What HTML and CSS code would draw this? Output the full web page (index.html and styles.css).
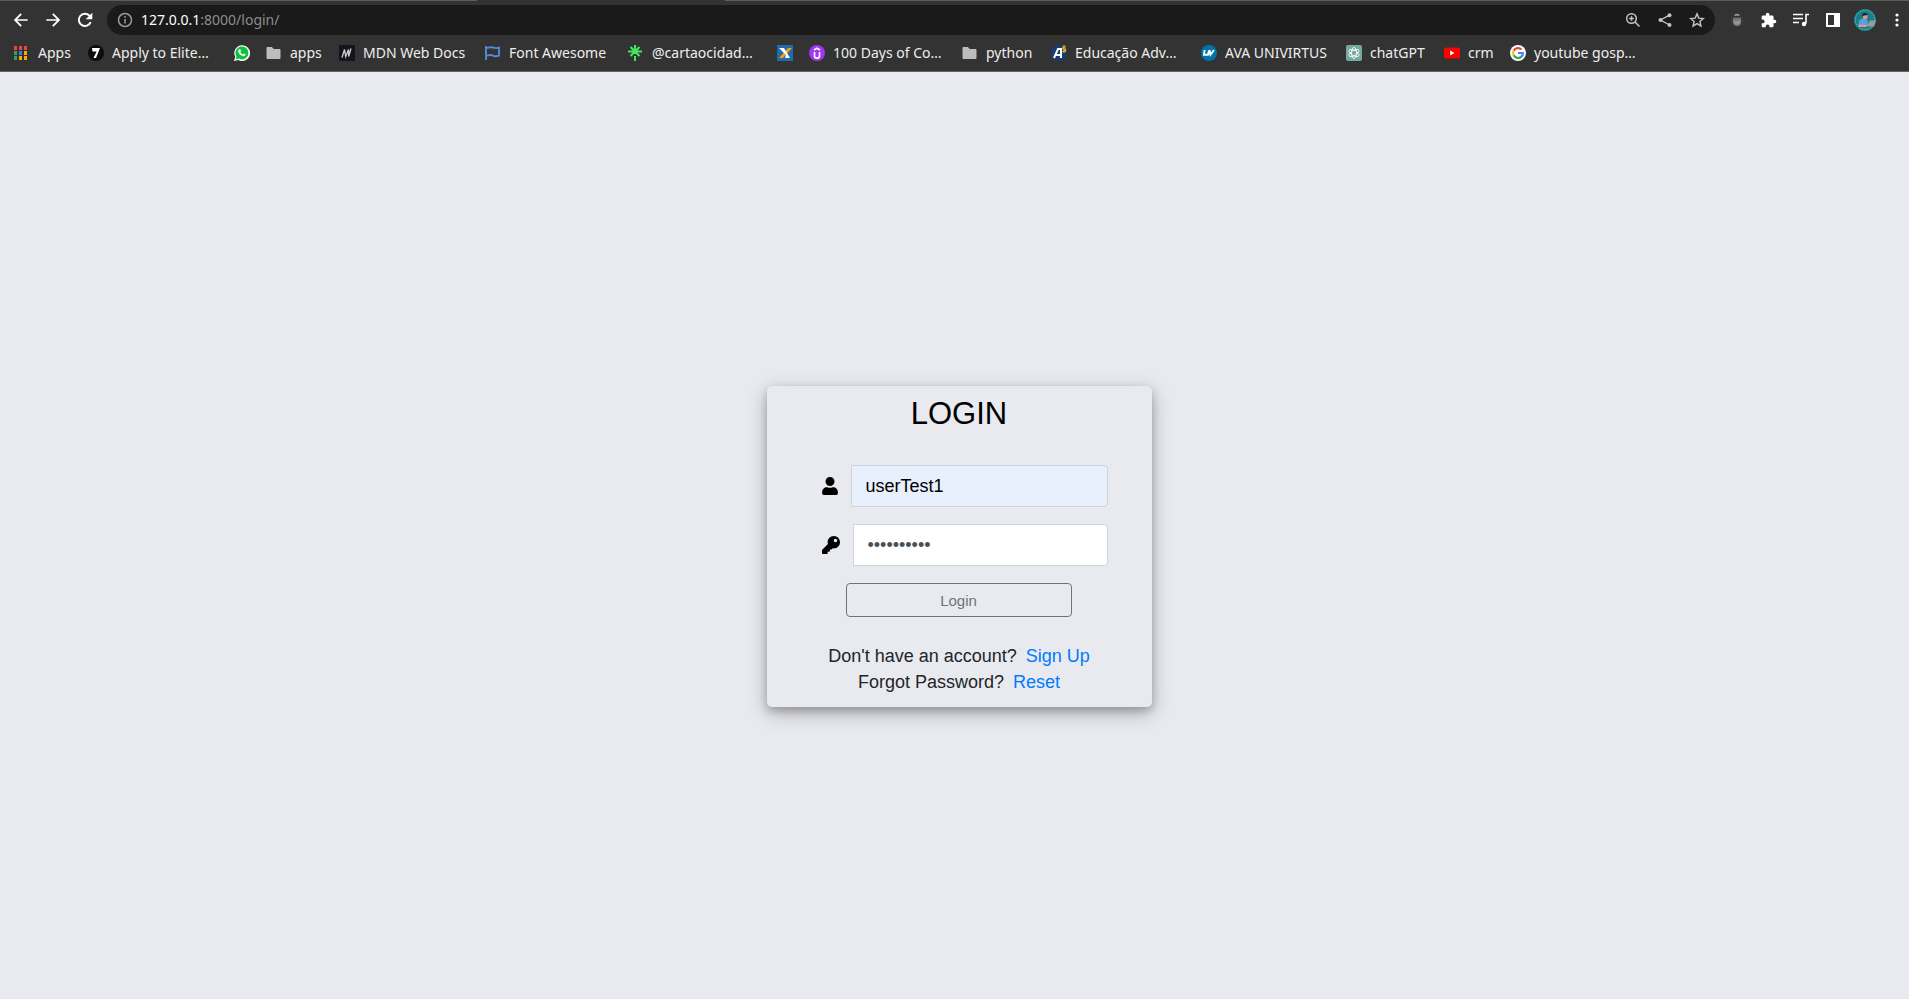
FILE: index.html
```
<!DOCTYPE html>
<html lang="en">
<head>
<meta charset="utf-8">
<title>Login</title>
<link rel="stylesheet" href="styles.css">
</head>
<body>
<header class="browser">
  <div class="tab-edge"><span class="edge-left"></span><span class="edge-right"></span></div>
  <div class="toolbar">
    <nav class="nav-buttons">
      <button class="icon-button" aria-label="Back"><svg class="icon-nav" viewBox="0 0 24 24" fill="#fff"><path d="M22 10.700H6.200l7-7L11.300 1.900 1.200 12l10.100 10.100 1.900-1.800-7-7H22z"/></svg></button>
      <button class="icon-button" aria-label="Forward"><svg class="icon-nav" viewBox="0 0 24 24" fill="#fff"><path d="M2 10.700h15.800l-7-7 1.900-1.800L22.800 12 12.700 22.100l-1.900-1.800 7-7H2z"/></svg></button>
      <button class="icon-button" aria-label="Reload"><svg class="icon-nav" viewBox="0 0 24 24"><path d="M20.500 15.200A9.200 9.200 0 1 1 18.700 5.500L21 8" fill="none" stroke="#fff" stroke-width="2.900"/><path d="M23 1v10H13z" fill="#fff"/></svg></button>
    </nav>
    <div class="omnibox">
      <svg class="icon-info" viewBox="0 0 16 16" fill="none" stroke="#9a9a9a" stroke-width="1.500"><circle cx="8" cy="8" r="6.500"/><path d="M8 7v4.500M8 4v1.700"/></svg>
      <span class="address"><span class="host">127.0.0.1</span>:8000/login/</span>
      <button class="icon-button" aria-label="Zoom"><svg class="icon-action" viewBox="0 0 16 16" fill="none" stroke="#c4c4c4" stroke-width="1.500"><circle cx="6.500" cy="6.500" r="4.800"/><path d="M10 10l4.500 4.500M6.500 4.200v4.600M4.200 6.500h4.600"/></svg></button>
      <button class="icon-button" aria-label="Share"><svg class="icon-action" viewBox="0 0 16 16" fill="#c4c4c4"><path d="M12.500 3.200L3.500 8l9 5" fill="none" stroke="#c4c4c4" stroke-width="1.400"/><circle cx="12.500" cy="3.200" r="2"/><circle cx="3.500" cy="8" r="2"/><circle cx="12.500" cy="13" r="2"/></svg></button>
      <button class="icon-button" aria-label="Bookmark this tab"><svg class="icon-action" viewBox="0 0 16 16" fill="none" stroke="#c4c4c4" stroke-width="1.400"><path d="M8 1.900l1.800 4.200 4.500.4-3.400 3 1 4.500L8 11.600 4.100 14l1-4.500-3.400-3 4.500-.4z"/></svg></button>
    </div>
    <div class="extensions">
      <button class="icon-button" aria-label="Debugger extension"><svg class="icon-action" viewBox="0 0 16 16"><defs><linearGradient id="bug" x1="0" y1="0" x2="0" y2="1"><stop offset="0" stop-color="#666"/><stop offset=".6" stop-color="#999"/><stop offset="1" stop-color="#777"/></linearGradient></defs><path d="M5 3.800C5.300 1 10.700 1 11 3.800z" fill="#999"/><path d="M4 5.500h8v4c0 6-8 6-8 0z" fill="url(#bug)"/><path d="M2 5l2 2M14 5l-2 2M1 9h3M12 9h3M2 13l2.500-2M14 13l-2.500-2" stroke="#494949"/></svg></button>
      <button class="icon-button" aria-label="Extensions"><svg class="icon-action" viewBox="1 0 23 23" fill="#fff"><path d="M20.500 11H19V7a2 2 0 0 0-2-2h-4V3.500a2.500 2.500 0 0 0-5 0V5H4a2 2 0 0 0-2 2v3.800h1.500a2.700 2.700 0 0 1 0 5.400H2V20c0 1.100.9 2 2 2h3.800v-1.500a2.700 2.700 0 0 1 5.400 0V22H17a2 2 0 0 0 2-2v-4h1.500a2.500 2.500 0 0 0 0-5z"/></svg></button>
      <button class="icon-button" aria-label="Media controls"><svg class="icon-action" viewBox="0 0 16 16" fill="none" stroke="#fff" stroke-width="1.600"><path d="M0 2.500h10M0 6.500h10M0 10.500h6"/><path d="M16 2.500h-3v9"/><circle cx="11" cy="12" r="2.200" fill="#fff" stroke="none"/></svg></button>
      <button class="icon-button" aria-label="Side panel"><svg class="icon-action" viewBox="0 0 16 16"><path d="M1 1h14v14H1zM3 3v10h6V3z" fill="#fff" fill-rule="evenodd"/></svg></button>
      <button class="icon-button" aria-label="Profile"><svg class="icon-avatar" viewBox="0 0 22 22"><circle cx="11" cy="11" r="11" fill="#15808a"/><circle cx="11" cy="11" r="9.700" fill="none" stroke="#78b5b7" stroke-dasharray="1.500 1"/><path d="M4 17l1.500-6 4-2 4 2 1 6z" fill="#5b9fdf"/><path d="M9 5.500h4.500V9l-2 1.500L9 9z" fill="#dc9c80"/><path d="M8 7.500C7.500 3 13.500 3 14 6l-4 .5z" fill="#182026"/><path d="M16 11.500h6l-2 6h-7z" fill="#9c9a98"/><path d="M4.500 15.500l8 .5v2H5z" fill="#dc9c80"/></svg></button>
      <button class="icon-button" aria-label="Menu"><svg class="icon-action" viewBox="0 0 16 16" fill="#fff"><circle cx="8" cy="3" r="1.600"/><circle cx="8" cy="8" r="1.600"/><circle cx="8" cy="13" r="1.600"/></svg></button>
    </div>
  </div>
  <nav class="bookmarks" aria-label="Bookmarks">
    <a class="bookmark" href="#"><svg class="icon-mark" viewBox="0 0 16 16"><path d="M0 1h3v4H0zM5 1h3v4H5zM10 1h3v4h-3z" fill="#ee4438"/><path d="M0 6h3v4H0zM0 11h3v4H0z" fill="#34a060"/><path d="M5 6h3v4H5z" fill="#2e82ee"/><path d="M10 6h3v4h-3zM5 11h3v4H5zM10 11h3v4h-3z" fill="#f9ab00"/></svg>Apps</a>
    <a class="bookmark" href="#"><svg class="icon-mark" viewBox="0 0 16 16"><circle cx="8" cy="8" r="8" fill="#0c0c0c"/><path d="M4 3h8L8 13H5.500L8.600 6.500H4.500z" fill="#fff"/></svg>Apply to Elite…</a>
    <a class="bookmark" href="#" aria-label="WhatsApp"><svg class="icon-mark" viewBox="0 0 16 16"><path d="M0 16l1.200-4.200A7.900 7.900 0 1 1 4.300 15z" fill="#fff"/><path d="M1.600 14.400l.8-3A6.500 6.500 0 1 1 4.700 13.600z" fill="#0dc143"/><path d="M5.200 4.200l1.100.1.700 1.800-.7.900c.6 1.200 1.400 1.900 2.600 2.400l.9-1 1.800.9c0 1.500-1.200 2-2.200 1.900-2.700-.4-4.900-2.700-5.200-4.900 0-.8.400-1.700 1-2.100z" fill="#fff"/></svg></a>
    <a class="bookmark" href="#"><svg class="icon-mark" viewBox="0 0 16 16"><path d="M1 2.500h5l1.800 2H14v9H1z" fill="#bdbdbd" stroke="#bdbdbd" stroke-linejoin="round"/></svg>apps</a>
    <a class="bookmark" href="#"><svg class="icon-mark" viewBox="0 0 16 16"><path d="M0 0h16v16H0z" fill="#15141f"/><path d="M3 12.500l2.500-8 1.200 7 2.800-7 .2 7 2.300-8" fill="none" stroke="#ccc" stroke-width="1.300"/></svg>MDN Web Docs</a>
    <a class="bookmark" href="#"><svg class="icon-mark" viewBox="0 0 16 16"><path d="M1 1v14M1 3c2 0 3-1 5.500-.8S10 4 14 2.700v8c-4 1.200-5 .3-7-.5S3.500 10.500 1 11" fill="none" stroke="#538bd9" stroke-width="1.900"/></svg>Font Awesome</a>
    <a class="bookmark" href="#"><svg class="icon-mark" viewBox="0 0 16 16"><path d="M7 0v9M0 6.500h14M2.500 2l9 9M11.500 2l-9 9M7 11v5" stroke="#43e660" stroke-width="2" fill="none"/></svg>@cartaocidad…</a>
    <a class="bookmark" href="#" aria-label="X"><svg class="icon-mark" viewBox="0 0 16 16"><path d="M0 0h16v16H0z" fill="#236aaa"/><path d="M15 3h-4L2 13h4z" fill="#f99d1c"/><path d="M2 3h5l6 10H8L9 10z" fill="#fff"/></svg></a>
    <a class="bookmark" href="#"><svg class="icon-mark" viewBox="0 0 16 16"><circle cx="8" cy="8" r="8" fill="#a435f0"/><path d="M5.500 7v4q0 2.200 2.500 2.200t2.500-2.200V7M5 5l3-1.700L11 5" fill="none" stroke="#fff" stroke-width="1.700"/></svg>100 Days of Co…</a>
    <a class="bookmark" href="#"><svg class="icon-mark" viewBox="0 0 16 16"><path d="M1 2.500h5l1.800 2H14v9H1z" fill="#bdbdbd" stroke="#bdbdbd" stroke-linejoin="round"/></svg>python</a>
    <a class="bookmark" href="#"><svg class="icon-mark" viewBox="0 0 16 16"><circle cx="8" cy="8" r="8" fill="#173b73"/><path d="M3 13L7 4h3v9M5 10h6" fill="none" stroke="#fff" stroke-width="2"/><path d="M15 2h-3v2h2.500v2.500H11M13 0v8" fill="none" stroke="#e5b22c" stroke-width="1.200"/></svg>Educação Adv…</a>
    <a class="bookmark" href="#"><svg class="icon-mark" viewBox="0 0 16 16"><circle cx="8" cy="8" r="8" fill="#0275a8"/><path d="M3.600 5l-.6 4.700h4L8 5.500M8.500 5l1 4.700L13 5" fill="none" stroke="#fff" stroke-width="1.900"/></svg>AVA UNIVIRTUS</a>
    <a class="bookmark" href="#"><svg class="icon-mark" viewBox="0 0 16 16"><rect width="16" height="16" rx="2" fill="#74aa9c"/><g fill="none" stroke="#fff" stroke-width=".8"><ellipse cx="8" cy="8" rx="2.600" ry="5.600"/><ellipse cx="8" cy="8" rx="2.600" ry="5.600" transform="rotate(60 8 8)"/><ellipse cx="8" cy="8" rx="2.600" ry="5.600" transform="rotate(120 8 8)"/></g></svg>chatGPT</a>
    <a class="bookmark" href="#"><svg class="icon-mark" viewBox="0 0 16 16"><rect y="2.500" width="16" height="11" rx="2.500" fill="#f00"/><path d="M6.200 5.500v5l4.300-2.500z" fill="#fff"/></svg>crm</a>
    <a class="bookmark" href="#"><svg class="icon-mark" viewBox="0 0 16 16"><circle cx="8" cy="8" r="8" fill="#fff"/><g fill="none" stroke-width="2.200"><path d="M11.500 4.600A4.900 4.900 0 0 0 3.700 5.700" stroke="#ea4335"/><path d="M3.700 5.700a4.900 4.900 0 0 0 0 4.600" stroke="#fbbc05"/><path d="M3.700 10.300a4.900 4.900 0 0 0 7.800 1.300" stroke="#34a853"/><path d="M11.300 11.800A4.900 4.900 0 0 0 12.900 8H8" stroke="#4285f4"/></g></svg>youtube gosp…</a>
  </nav>
</header>
<main class="page">
  <section class="card">
    <h1 class="title">LOGIN</h1>
    <form class="form">
      <div class="field">
        <label class="field-icon" for="username" aria-label="Username"><svg class="icon-user" viewBox="0 0 448 512"><path d="M224 256c70.700 0 128-57.300 128-128S294.700 0 224 0 96 57.300 96 128s57.300 128 128 128zm89.600 32h-16.700c-22.200 10.200-46.900 16-72.900 16s-50.600-5.800-72.900-16h-16.700C60.200 288 0 348.200 0 422.400V464c0 26.500 21.500 48 48 48h352c26.500 0 48-21.500 48-48v-41.600c0-74.200-60.200-134.400-134.400-134.400z"/></svg></label>
        <input class="input autofilled" id="username" type="text" value="userTest1">
      </div>
      <div class="field">
        <label class="field-icon" for="password" aria-label="Password"><svg class="icon-key" viewBox="0 0 512 512"><path d="M512 176c0 97.200-78.800 176-176 176-11.200 0-22.200-1.100-32.800-3.100l-24 27c-4.500 5.100-11.100 8.100-17.900 8.100H224v40c0 13.300-10.700 24-24 24h-40v40c0 13.300-10.700 24-24 24H24c-13.300 0-24-10.700-24-24v-78.100c0-6.400 2.500-12.500 7-17l161.800-161.800C163 213.900 160 195.300 160 176 160 78.800 238.800 0 336 0s176 78.500 176 176zM336 128c0 26.500 21.500 48 48 48s48-21.500 48-48-21.500-48-48-48-48 21.500-48 48z"/></svg></label>
        <input class="input" id="password" type="password" value="abcdefghij">
      </div>
      <button class="submit" type="button">Login</button>
    </form>
    <p class="links">Don't have an account? <a class="link" href="#">Sign Up</a></p>
    <p class="links">Forgot Password? <a class="link" href="#">Reset</a></p>
  </section>
</main>
</body>
</html>
```
FILE: styles.css
```
* { box-sizing: border-box; }

body {
  margin: 0;
  min-height: 100vh;
  display: flex;
  flex-direction: column;
  background: #e9eaef;
  color: #212529;
  font: 18px/26px "Liberation Sans", Arial, sans-serif;
}

svg { display: block; flex: none; }

/* Browser chrome */
.browser {
  background: #333;
  border-bottom: 1px solid #636363;
  color: #eee;
  font: 14px/20px "Noto Sans", sans-serif;
}
.tab-edge { display: flex; justify-content: space-between; height: 1px; }
.edge-left { width: 25%; background: #5c5c5c; }
.edge-right { width: 62%; background: #5c5c5c; }

.toolbar { display: flex; align-items: center; padding: 4px 4px 0 13px; }
.nav-buttons { display: flex; gap: 16px; margin-right: 14px; }
.icon-button {
  display: flex;
  align-items: center;
  justify-content: center;
  width: 16px;
  padding: 0;
  border: 0;
  background: none;
}
.icon-nav, .icon-info, .icon-action, .icon-mark { width: 16px; height: 16px; }
.icon-avatar { width: 22px; height: 22px; }

.omnibox {
  flex: 1;
  display: flex;
  align-items: center;
  gap: 16px;
  height: 30px;
  padding: 0 10px;
  border-radius: 15px;
  background: #1a1a1a;
}
.address { flex: 1; margin-left: -8px; color: #8d8d8d; }
.host { color: #fff; }
.extensions { display: flex; align-items: center; gap: 16px; margin-left: 14px; }

.bookmarks {
  display: grid;
  grid-template-columns: 74px 146px 32px 73px 146px 143px 149px 32px 153px 89px 150px 145px 98px 66px 150px;
  padding: 8px 14px;
}
.bookmark {
  display: flex;
  align-items: center;
  gap: 8px;
  color: #eee;
  text-decoration: none;
  white-space: nowrap;
}

/* Login page */
.page {
  flex: 1;
  display: flex;
  align-items: center;
  justify-content: center;
  padding: 32px 0 10px 9px;
}
.card {
  width: 385px;
  padding: 9px 44px 12px 55px;
  border-radius: 5px;
  background: #e9eaef;
  box-shadow: 0 4px 8px rgba(0, 0, 0, .2), 0 6px 20px rgba(0, 0, 0, .26);
}
.title {
  margin: 0 11px 32px 0;
  color: #000;
  font-size: 31px;
  font-weight: 400;
  line-height: 38px;
  text-align: center;
}
.form { display: flex; flex-direction: column; }
.field { display: flex; align-items: center; margin-bottom: 17px; }
.field-icon { margin-right: 13px; }
.icon-user { width: 16px; height: 18px; }
.icon-key { width: 18px; height: 18px; }
.input {
  flex: 1;
  min-width: 0;
  height: 42px;
  padding: 7px 14px;
  border: 1px solid #ced4da;
  border-radius: 0 4px 4px 0;
  background: #fff;
  color: #495057;
  font: 18px/26px "Liberation Sans", Arial, sans-serif;
}
.autofilled { background: #e8f0fe; color: #000; }
.submit {
  height: 34px;
  margin: 0 36px 26px 24px;
  border: 1px solid #6c757d;
  border-radius: 4px;
  background: transparent;
  color: #6c757d;
  font: 15px/23px "Liberation Sans", Arial, sans-serif;
}
.links { margin: 0 11px 0 0; text-align: center; white-space: nowrap; }
.link { margin-left: 4px; color: #007bff; text-decoration: none; }
```
